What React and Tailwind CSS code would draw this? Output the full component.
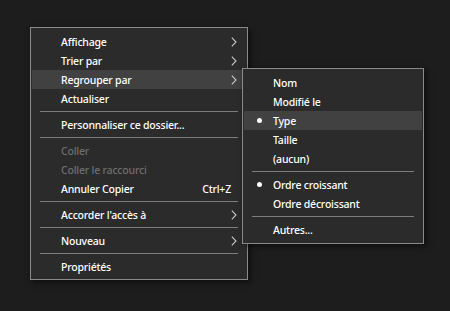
import React from "react";

const Chevron = () => (
  <svg width="6" height="10" viewBox="0 0 6 10" className="absolute right-[9px] top-[5px]">
    <path d="M0.8 0.6 L5 5 L0.8 9.4" fill="none" stroke="#c8c8c8" strokeWidth="1.1" />
  </svg>
);

const Item = ({ label, sub, disabled, hl, shortcut, bullet }) => (
  <div
    className={`relative h-[19px] flex items-center pl-[29px] mx-[1px] ${hl ? "bg-[#414141]" : ""} ${
      disabled ? "text-[#6e6e6e]" : "text-white"
    }`}
  >
    {bullet && <div className="absolute left-[13px] top-[7px] w-[5px] h-[5px] rounded-full bg-white" />}
    <span className="leading-none pt-[2px]">{label}</span>
    {shortcut && <span className="absolute right-[15px] leading-none pt-[2px]">{shortcut}</span>}
    {sub && <Chevron />}
  </div>
);

const Sep = () => (
  <div className="h-[7px] flex items-center px-[9px]">
    <div className="h-px w-full bg-[#7c7c7c]" />
  </div>
);

export default function App() {
  return (
    <div
      className="relative w-[450px] h-[311px] bg-[#1d1d1d] overflow-hidden text-[10.5px] tracking-[-0.2px] font-medium"
      style={{ fontFamily: '"Noto Sans", "Open Sans", sans-serif' }}
    >
      <div className="absolute left-[30px] top-[27px] w-[218px] h-[253px] border border-[#8a8a8a] bg-[#2b2b2b] pt-[4px] shadow-[2px_2px_6px_rgba(0,0,0,0.6)]">
        <Item label="Affichage" sub />
        <Item label="Trier par" sub />
        <Item label="Regrouper par" sub hl />
        <Item label="Actualiser" />
        <Sep />
        <Item label="Personnaliser ce dossier..." />
        <Sep />
        <Item label="Coller" disabled />
        <Item label="Coller le raccourci" disabled />
        <Item label="Annuler Copier" shortcut="Ctrl+Z" />
        <Sep />
        <Item label="Accorder l'accès à" sub />
        <Sep />
        <Item label="Nouveau" sub />
        <Sep />
        <Item label="Propriétés" />
      </div>
      <div className="absolute left-[242px] top-[68px] w-[182px] h-[176px] border border-[#8a8a8a] bg-[#2b2b2b] pt-[4px] shadow-[2px_2px_6px_rgba(0,0,0,0.6)]">
        <Item label="Nom" />
        <Item label="Modifié le" />
        <Item label="Type" hl bullet />
        <Item label="Taille" />
        <Item label="(aucun)" />
        <Sep />
        <Item label="Ordre croissant" bullet />
        <Item label="Ordre décroissant" />
        <Sep />
        <Item label="Autres..." />
      </div>
    </div>
  );
}
